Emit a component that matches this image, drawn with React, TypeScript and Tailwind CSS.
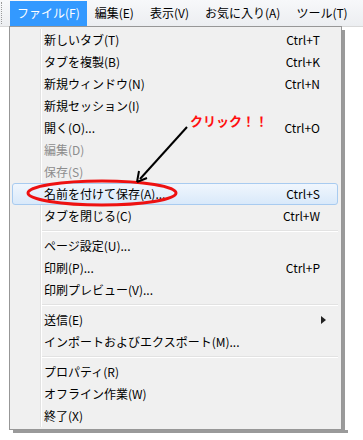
import React from 'react'

type Item = { label: string; shortcut?: string; disabled?: boolean; active?: boolean; sub?: boolean }

const groups: Item[][] = [
  [
    { label: '新しいタブ(T)', shortcut: 'Ctrl+T' },
    { label: 'タブを複製(B)', shortcut: 'Ctrl+K' },
    { label: '新規ウィンドウ(N)', shortcut: 'Ctrl+N' },
    { label: '新規セッション(I)' },
    { label: '開く(O)...', shortcut: 'Ctrl+O' },
    { label: '編集(D)', disabled: true },
    { label: '保存(S)', disabled: true },
    { label: '名前を付けて保存(A)...', shortcut: 'Ctrl+S', active: true },
    { label: 'タブを閉じる(C)', shortcut: 'Ctrl+W' },
  ],
  [
    { label: 'ページ設定(U)...' },
    { label: '印刷(P)...', shortcut: 'Ctrl+P' },
    { label: '印刷プレビュー(V)...' },
  ],
  [
    { label: '送信(E)', sub: true },
    { label: 'インポートおよびエクスポート(M)...' },
  ],
  [
    { label: 'プロパティ(R)' },
    { label: 'オフライン作業(W)' },
    { label: '終了(X)' },
  ],
]

const font = { fontFamily: '"Noto Sans CJK JP", "Liberation Sans", sans-serif' }

function Row({ item }: { item: Item }) {
  return (
    <div
      className={`relative flex items-center h-[22px] pl-[34px] pr-[21px] text-[12px] ${
        item.disabled ? 'text-[#8d8d8d]' : 'text-black'
      }`}
    >
      {item.active && (
        <div className="absolute left-[2px] right-[3px] top-0 bottom-0 rounded-[3px] border border-[#a8cbf0] bg-gradient-to-b from-[#f0f6fd] to-[#d9e9fa]" />
      )}
      <span className="relative flex-1">{item.label}</span>
      {item.shortcut && <span className="relative">{item.shortcut}</span>}
      {item.sub && (
        <svg className="relative mr-[-6px]" width="5" height="8" viewBox="0 0 5 8">
          <path d="M0 0 L5 4 L0 8 Z" fill="#222" />
        </svg>
      )}
    </div>
  )
}

export default function App() {
  return (
    <div className="relative w-[363px] h-[440px] bg-white overflow-hidden" style={font}>
      <div className="flex items-center h-[27px] bg-gradient-to-b from-[#f7f8fa] to-[#eceef1] border-b border-[#d8d8d8] text-[12px] text-black">
        <div className="w-[3px] h-[22px] ml-[1px] mr-[6px] border-l border-dotted border-[#9a9a9a]" />
        <div className="h-[25px] flex items-center px-[7px] bg-[#3399ff] text-white">ファイル(F)</div>
        <div className="px-[8px]">編集(E)</div>
        <div className="px-[8px]">表示(V)</div>
        <div className="px-[8px]">お気に入り(A)</div>
        <div className="px-[8px]">ツール(T)</div>
      </div>

      <div className="ml-[9px] mt-[-1px] w-[336px] flex">
        <div className="w-[333px] border border-[#979797] bg-[#f0f0f0] py-[2px] relative">
          <div className="absolute left-[30px] top-[2px] bottom-[2px] w-[2px] border-l border-[#e2e2e2] bg-white" />
          {groups.map((g, gi) => (
            <div key={gi}>
              {gi > 0 && (
                <div className="ml-[30px] mr-[3px] my-[3px] h-[2px] border-t border-[#e2e2e2] bg-white" />
              )}
              {g.map((it) => (
                <Row key={it.label} item={it} />
              ))}
            </div>
          ))}
        </div>
        <div className="w-[3px] mt-[4px] bg-[#9a9a9a]" />
      </div>
      <div className="ml-[13px] w-[335px] h-[3px] bg-[#9a9a9a]" />

      <svg className="absolute left-0 top-0" width="363" height="440">
        <ellipse cx="102" cy="193" rx="74" ry="12" fill="none" stroke="#ee1111" strokeWidth="3" />
        <line x1="187" y1="127" x2="140" y2="179" stroke="#000" strokeWidth="2" />
        <path d="M137 182 L139 171 M137 182 L147 178" stroke="#000" strokeWidth="2" fill="none" />
      </svg>
      <div className="absolute left-[190px] top-[111px] text-[13px] font-bold text-[#ff1010]">
        クリック！！
      </div>
    </div>
  )
}
